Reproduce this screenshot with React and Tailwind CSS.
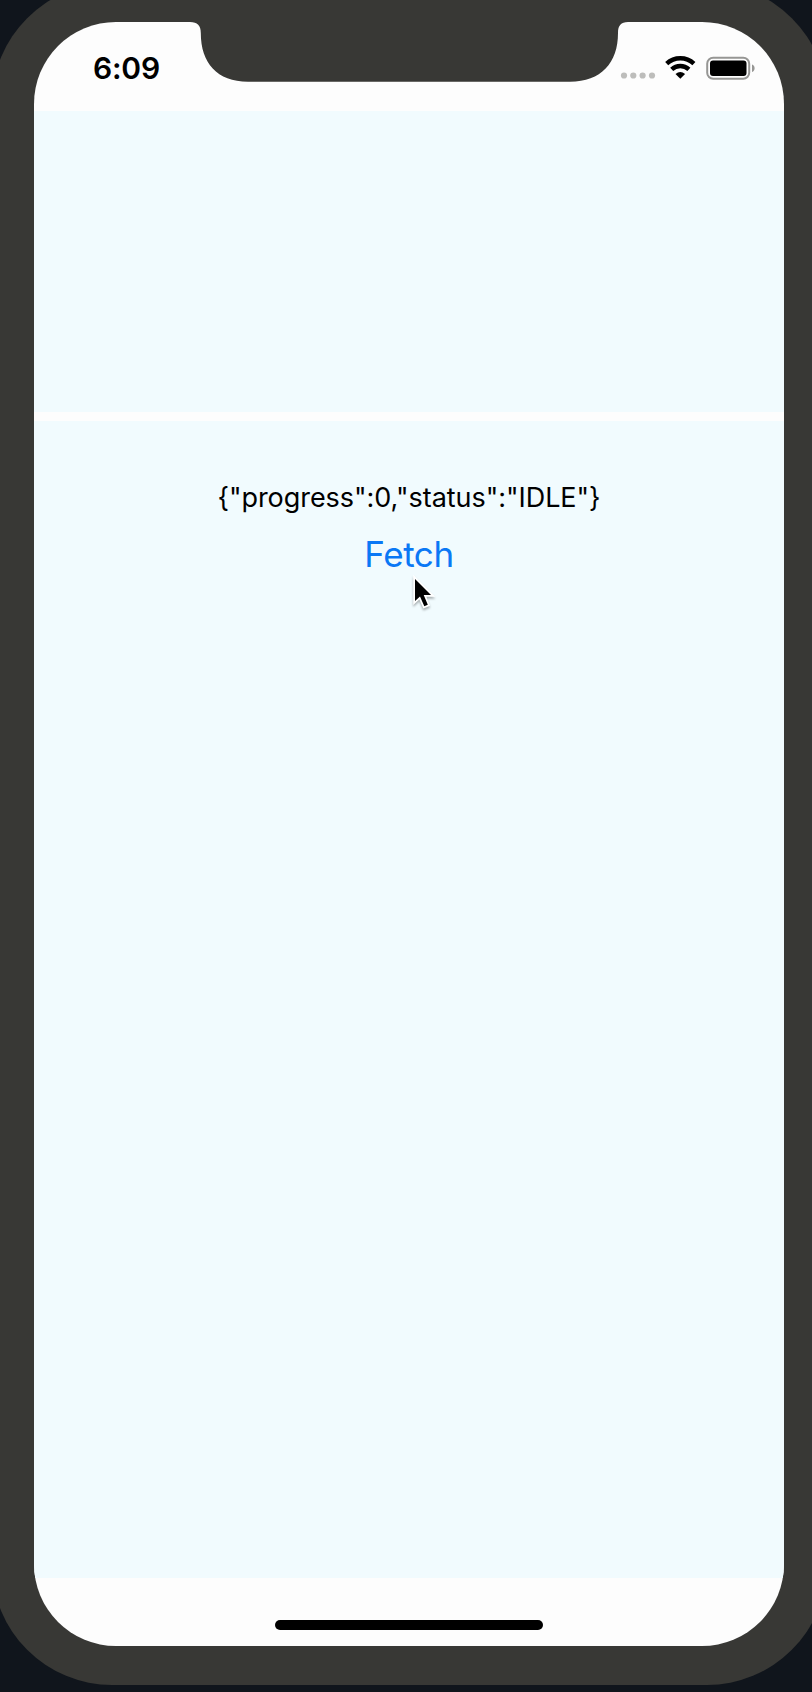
function Notch() {
  return (
    <svg className="absolute left-[153px] top-[-1px]" width="444" height="61" viewBox="0 0 444 61" fill="#383835">
      <path d="M0 0H444V1H441C434 1 431 4.500 431 12C431 42 414 60.700 383 60.700H61C30 60.700 13.800 42 13.800 12C13.800 4.500 10.500 1 3 1H0Z" />
    </svg>
  );
}

function StatusBar() {
  return (
    <header className="relative flex h-[89px] shrink-0 items-start justify-between pl-[59px] pr-[28px] pt-[26px]">
      <Notch />
      <time className="text-[30px] font-semibold leading-[40px] tracking-[-0.2px] text-black">6:09</time>
      <div className="flex items-start pt-[8px]">
        <svg width="36" height="26" viewBox="0 0 36 26" fill="#bdbdbb">
          <circle cx="4" cy="19.500" r="3.100" />
          <circle cx="13.300" cy="19.500" r="3.100" />
          <circle cx="22.600" cy="19.500" r="3.100" />
          <circle cx="32" cy="19.500" r="3.100" />
        </svg>
        <svg className="ml-[9px]" width="32" height="26" viewBox="0 0 32 26">
          <g fill="none" stroke="#000" strokeWidth="4.500">
            <path d="M1.700 7.700A20 20 0 0 1 28.900 7.700" />
            <path d="M6.700 13.300A12.700 12.700 0 0 1 23.900 13.300" />
          </g>
          <path d="M15.300 22.800L10.500 18.100Q15.300 13.700 20.100 18.100Z" />
        </svg>
        <svg className="ml-[9px]" width="50" height="26" viewBox="0 0 50 26">
          <rect x="1.200" y="1.700" width="42" height="21" rx="6" fill="none" stroke="#969694" strokeWidth="2" />
          <rect x="4" y="4.500" width="36.500" height="15.500" rx="3" />
          <path d="M46 8.500C49.500 9.500 49.500 15 46 16Z" fill="#969694" />
        </svg>
      </div>
    </header>
  );
}

function Cursor() {
  return (
    <svg className="absolute left-[375px] top-[552px] drop-shadow-[0_2px_1px_rgba(0,0,0,0.3)]" width="28" height="40" viewBox="0 0 28 40">
      <path d="M6 5V27L11 22.500L15.300 32.300L18.800 30.800L14.700 21H22Z" fill="#000" stroke="#fff" strokeWidth="3.500" paintOrder="stroke" />
    </svg>
  );
}

export default function App() {
  return (
    <div className="flex h-[1692px] w-[812px] overflow-hidden bg-[#10151c] font-['Inter',sans-serif]">
      <div className="-ml-[8px] -mt-[17px] h-[1702px] w-[835px] shrink-0 rounded-[120px] bg-[#383835] pl-[42px] pt-[39px]">
        <main className="relative flex h-[1624px] w-[750px] flex-col overflow-hidden rounded-[82px] bg-[#fdfdfd]">
          <StatusBar />
          <section className="h-[301px] shrink-0 bg-[#f1fbfe]" />
          <section className="mt-[9px] flex h-[1157px] shrink-0 flex-col items-center bg-[#f1fbfe] pt-[60px]">
            <p className="whitespace-nowrap text-[27px] leading-[34px] tracking-[-0.05px] text-black">{'{"progress":0,"status":"IDLE"}'}</p>
            <button className="mt-[17px] text-[35px] leading-[44px] tracking-[-0.4px] text-[#0a78f5]">Fetch</button>
          </section>
          <footer className="flex flex-1 justify-center pt-[42px]">
            <div className="h-[10px] w-[268px] rounded-full bg-black" />
          </footer>
          <Cursor />
        </main>
      </div>
    </div>
  );
}
